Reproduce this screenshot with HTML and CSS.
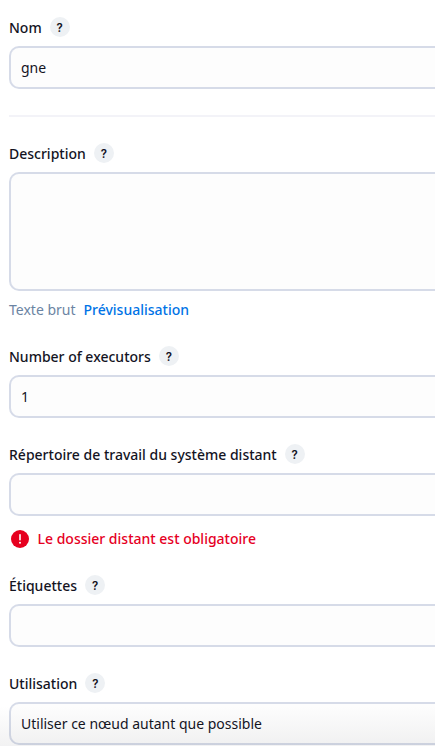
FILE: index.html
```html
<!DOCTYPE html>
<html lang="fr">
<head>
<meta charset="utf-8">
<title>Configuration du nœud</title>
<link rel="stylesheet" href="styles.css">
</head>
<body>
<form class="form">
  <section class="item">
    <div class="label">Nom<span class="help">?</span></div>
    <div class="input">gne</div>
  </section>
  <div class="divider"></div>
  <section class="item">
    <div class="label">Description<span class="help">?</span></div>
    <div class="input textarea"></div>
    <div class="preview"><span>Texte brut</span><a class="link">Prévisualisation</a></div>
  </section>
  <section class="item">
    <div class="label">Number of executors<span class="help">?</span></div>
    <div class="input">1</div>
  </section>
  <section class="item">
    <div class="label">Répertoire de travail du système distant<span class="help">?</span></div>
    <div class="input"></div>
    <div class="error">
      <svg class="error-icon" viewBox="0 0 18 18"><circle cx="9" cy="9" r="9" fill="#e6001f"/><path d="M9 4.8v4.9" stroke="#fff" stroke-width="1.6" stroke-linecap="round"/><circle cx="9" cy="12.7" r="1" fill="#fff"/></svg>
      Le dossier distant est obligatoire
    </div>
  </section>
  <section class="item">
    <div class="label">Étiquettes<span class="help">?</span></div>
    <div class="input"></div>
  </section>
  <section class="item item-last">
    <div class="label">Utilisation<span class="help">?</span></div>
    <div class="input">Utiliser ce nœud autant que possible</div>
  </section>
</form>
<div class="bottom-shade"></div>
</body>
</html>
```
FILE: styles.css
```css
* { box-sizing: border-box; }
body {
  margin: 0;
  height: 748px;
  overflow: hidden;
  background: #fff;
  color: #14141f;
  font: 14px/20px "Noto Sans", sans-serif;
}
.form { padding: 17px 0 0 9px; }
.item { margin-bottom: 26px; }
.item-last { margin-bottom: 0; }
.label {
  display: flex;
  align-items: center;
  gap: 8px;
  height: 21px;
  margin-bottom: 8px;
  font-weight: 500;
}
.help {
  display: flex;
  align-items: center;
  justify-content: center;
  width: 20px;
  height: 20px;
  margin-top: -1px;
  padding-top: 2px;
  border-radius: 50%;
  background: #eef1f4;
  font: 600 11.5px/18px Inter, sans-serif;
}
.input {
  display: flex;
  align-items: center;
  height: 43px;
  padding: 0 10px;
  border: 2px solid #d6dbe8;
  border-right: 0;
  border-radius: 10px 0 0 10px;
  background: #fdfdfd;
}
.divider { height: 2px; margin-bottom: 26px; background: #f3f3f8; }
.textarea { height: 119px; }
.preview { display: flex; gap: 8px; height: 20px; margin-top: 9px; color: #6b84a3; }
.link { color: #0073e6; font-weight: 500; }
.error {
  display: flex;
  align-items: center;
  gap: 8.5px;
  height: 20px;
  margin: 13px 0 0 2px;
  color: #e6001f;
  font-weight: 500;
}
.error-icon { width: 18px; height: 18px; }
.bottom-shade {
  position: absolute;
  right: 0;
  bottom: 2px;
  left: 0;
  height: 40px;
  background: linear-gradient(rgba(20, 20, 31, 0), rgba(20, 20, 31, .055));
  pointer-events: none;
}
```
